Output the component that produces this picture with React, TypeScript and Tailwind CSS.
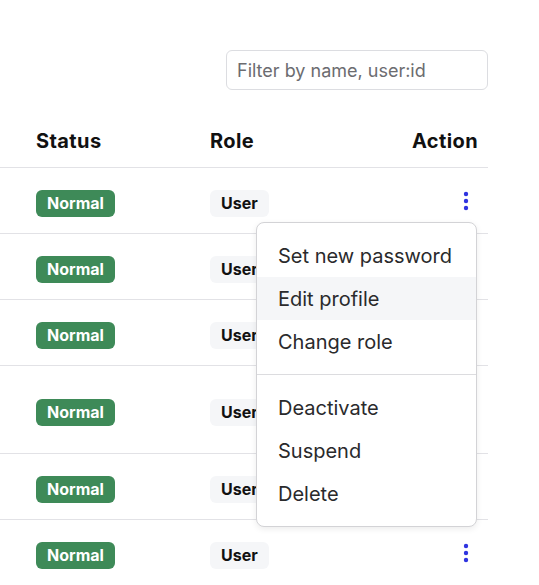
import { useState } from "react";

type Row = {
  id: number;
  status: string;
  role: string;
  tall?: boolean;
};

const rows: Row[] = [
  { id: 1, status: "Normal", role: "User" },
  { id: 2, status: "Normal", role: "User" },
  { id: 3, status: "Normal", role: "User" },
  { id: 4, status: "Normal", role: "User", tall: true },
  { id: 5, status: "Normal", role: "User" },
  { id: 6, status: "Normal", role: "User" },
];

const menuGroups = [
  ["Set new password", "Edit profile", "Change role"],
  ["Deactivate", "Suspend", "Delete"],
];

function Dots() {
  return (
    <svg width="6" height="20" viewBox="0 0 6 20" fill="#2f34e0">
      <circle cx="3" cy="3" r="2.2" />
      <circle cx="3" cy="10" r="2.2" />
      <circle cx="3" cy="17" r="2.2" />
    </svg>
  );
}

export default function App() {
  const [filter, setFilter] = useState("");
  const [openRow] = useState(1);

  return (
    <div className="relative h-[585px] w-[539px] overflow-hidden bg-white font-['Inter','Helvetica',sans-serif] text-[#111]">
      <div className="flex w-[488px] justify-end pt-[50px]">
        <input
          className="h-10 w-[262px] rounded-md border border-[#dcdde1] px-[10px] text-[18px] text-[#222] outline-none placeholder:text-[#6c6c70]"
          onChange={(event) => setFilter(event.target.value)}
          placeholder="Filter by name, user:id"
          value={filter}
        />
      </div>

      <div className="mt-[25px] w-[488px]">
        <div className="grid h-[53px] grid-cols-[210px_1fr_auto] items-center border-b border-[#e2e2e6] text-[20px] font-bold tracking-[0.02em]">
          <div className="pl-9">Status</div>
          <div>Role</div>
          <div className="pr-[10px]">Action</div>
        </div>

        {rows.map((row) => (
          <div
            className={`grid grid-cols-[210px_1fr_auto] items-center border-b border-[#e2e2e6] pt-[5px] ${
              row.tall ? "h-[88px]" : "h-[66px]"
            }`}
            key={row.id}
          >
            <div className="pl-9">
              <span className="inline-flex h-[27px] w-[79px] items-center justify-center rounded-md bg-[#3e8a58] text-[16px] font-bold text-white">
                {row.status}
              </span>
            </div>
            <div>
              <span className="inline-flex h-[27px] items-center rounded-md bg-[#f5f6f8] px-[11px] text-[16px] font-bold">
                {row.role}
              </span>
            </div>
            <div className="pr-[10px]">
              <button className="-mt-[5px] flex h-6 w-6 items-center justify-center" type="button">
                <Dots />
              </button>
            </div>
          </div>
        ))}
      </div>

      {openRow === 1 && (
        <div className="absolute left-[256px] top-[222px] w-[221px] rounded-lg border border-[#d3d3d6] bg-white py-[11px] shadow-[0_2px_6px_rgba(0,0,0,0.08)]">
          {menuGroups.map((group, index) => (
            <div key={index}>
              {index > 0 && <div className="my-[11px] h-px bg-[#dcdcdf]" />}
              {group.map((item) => (
                <div
                  className={`flex h-[43px] items-center px-[21px] text-[20px] text-[#2a2a2c] ${
                    item === "Edit profile" ? "bg-[#f5f6f8]" : ""
                  }`}
                  key={item}
                >
                  {item}
                </div>
              ))}
            </div>
          ))}
        </div>
      )}
    </div>
  );
}
